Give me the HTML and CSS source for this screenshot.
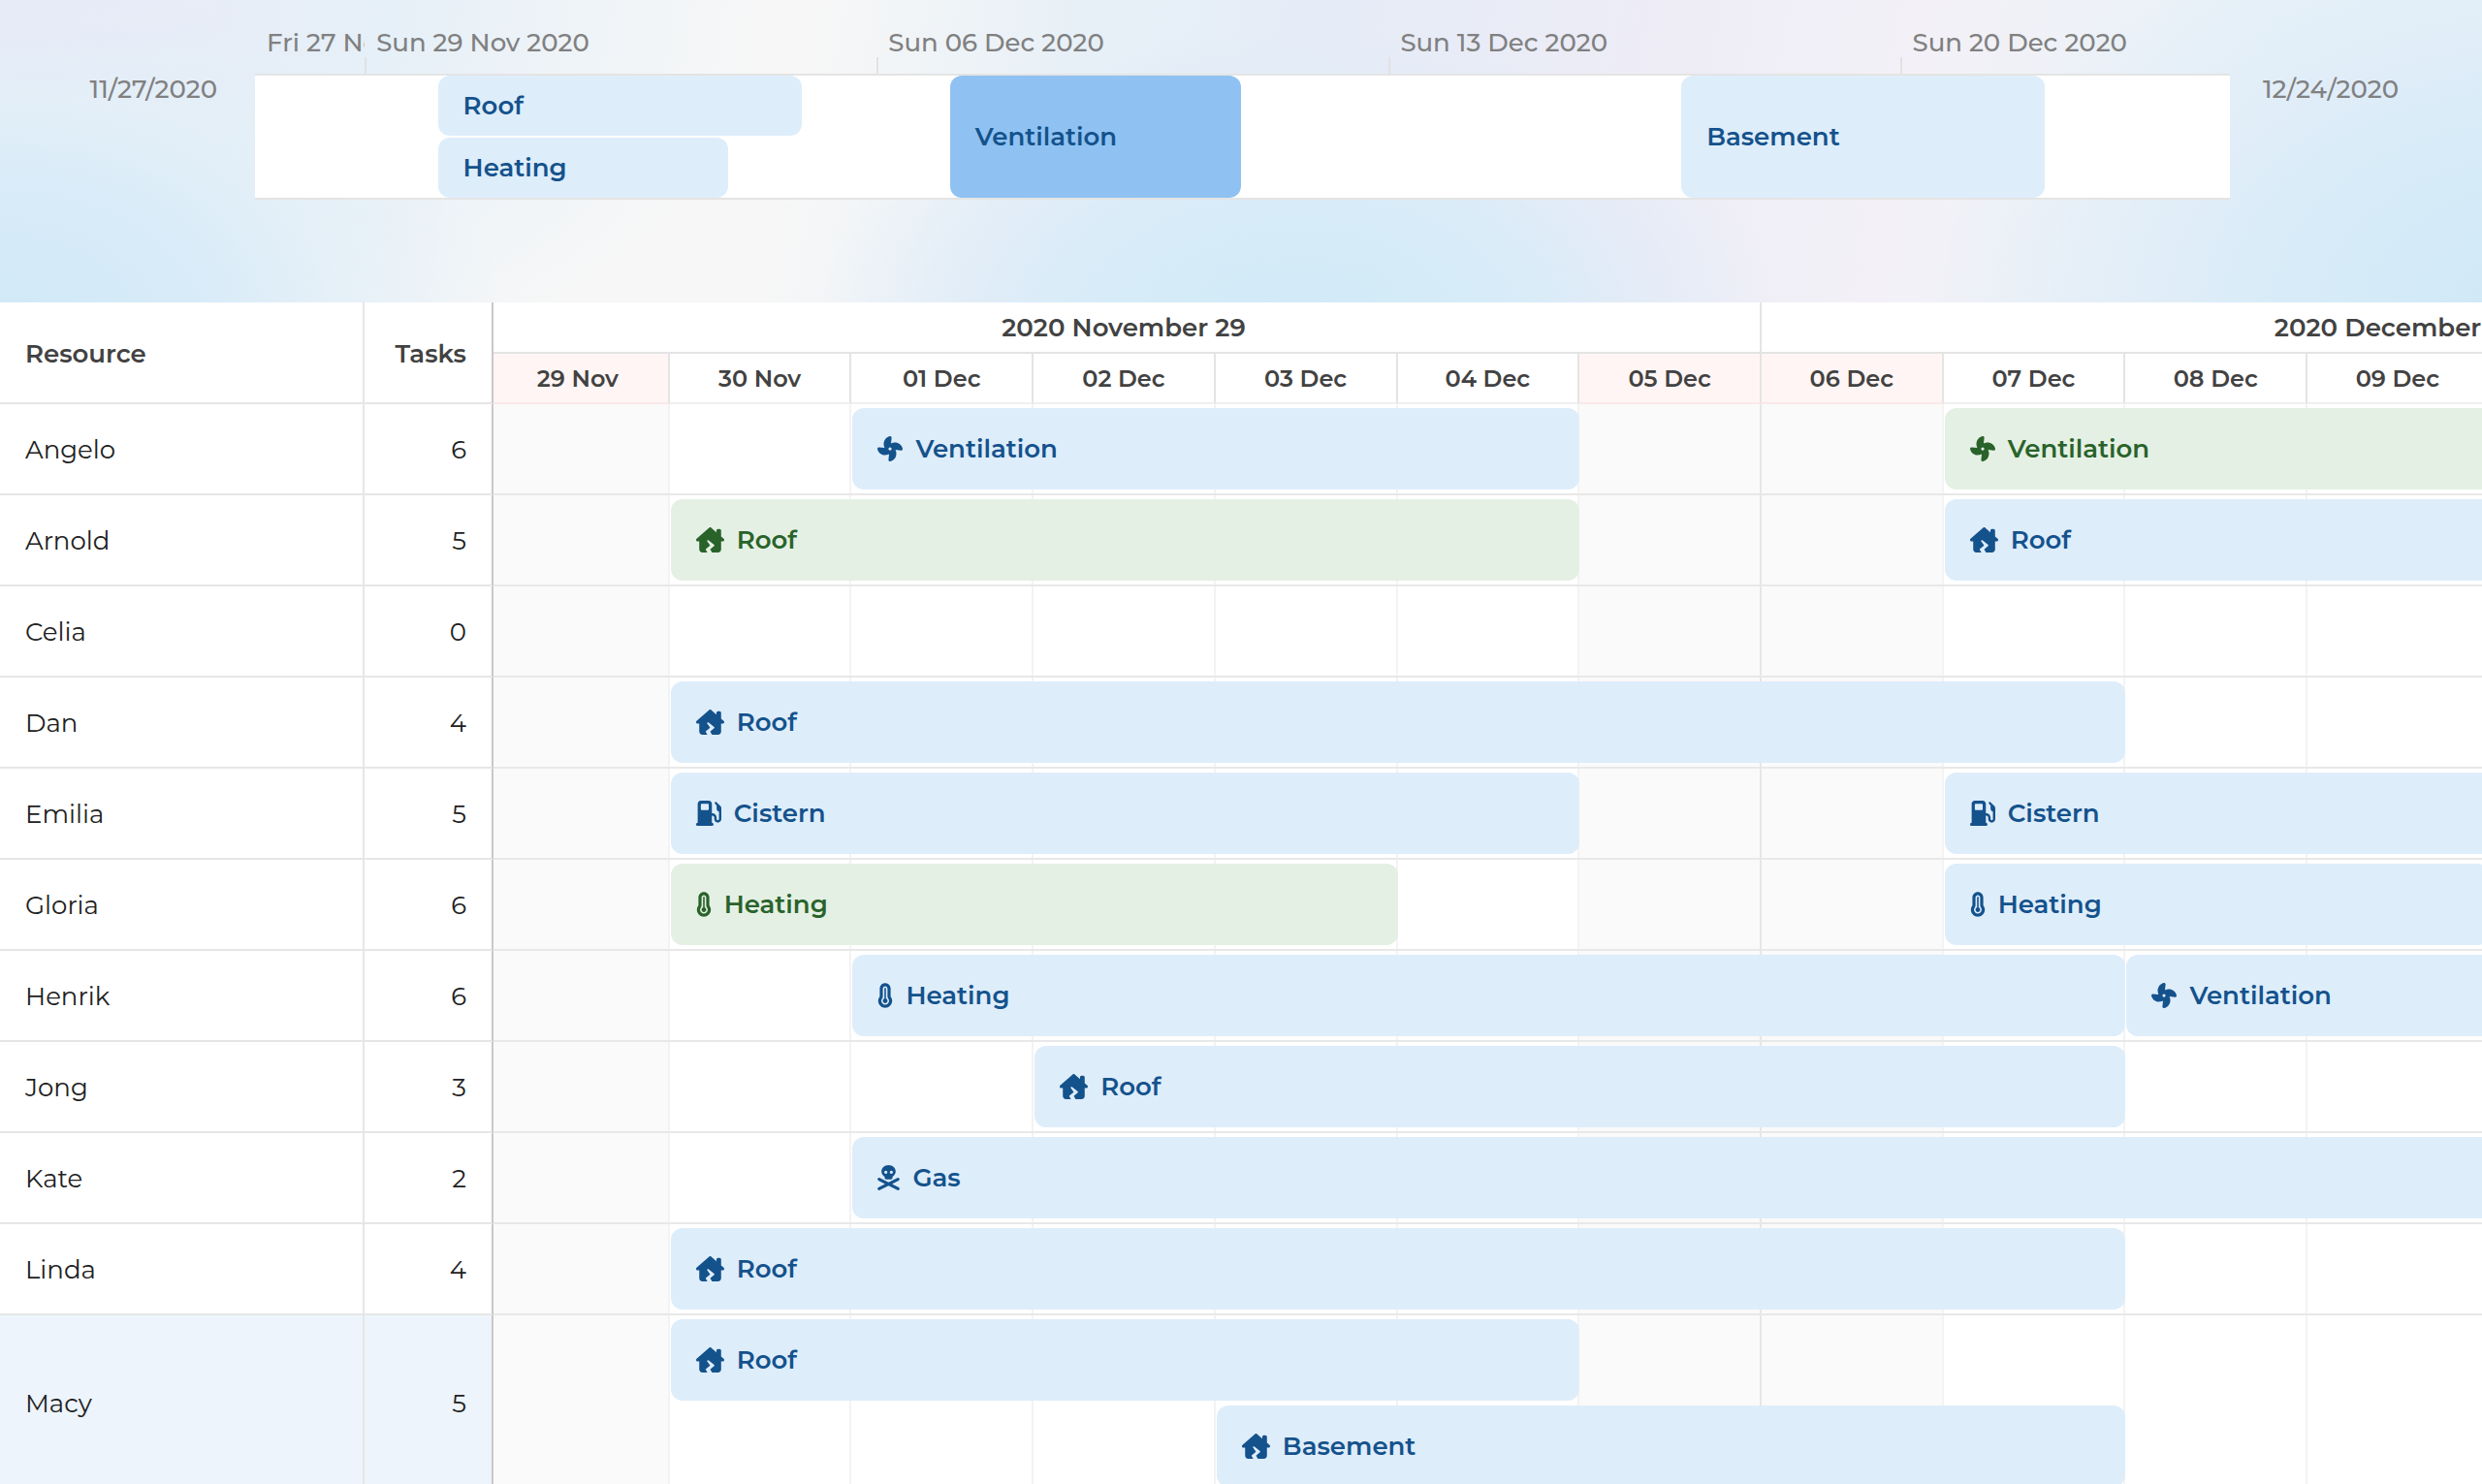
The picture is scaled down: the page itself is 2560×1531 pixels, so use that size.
FILE: index.html
```html
<!DOCTYPE html>
<html lang="en">
<head>
    <meta charset="utf-8">
    <title>Resource Scheduler</title>
    <link rel="stylesheet" href="styles.css">
</head>
<body>
    <svg class="icon-defs" aria-hidden="true">
        <symbol id="icon-fan" viewBox="0 0 512 512"><path d="M258.6 0c-1.7 0-3.4 .1-5.1 .5C168 17 115.6 102.3 130.5 189.3c2.9 17 8.4 32.9 15.9 47.4L32 224H29.4C13.2 224 0 237.2 0 253.4c0 1.7 .1 3.4 .5 5.1C17 344 102.3 396.4 189.3 381.5c17-2.9 32.9-8.4 47.4-15.9L224 480v2.6c0 16.2 13.2 29.4 29.4 29.4c1.7 0 3.4-.1 5.1-.5C344 495 396.4 409.7 381.5 322.7c-2.9-17-8.4-32.9-15.9-47.4L480 288h2.6c16.2 0 29.4-13.2 29.4-29.4c0-1.7-.1-3.4-.5-5.1C495 168 409.7 115.6 322.7 130.5c-17 2.9-32.9 8.4-47.4 15.9L288 32V29.4C288 13.2 274.8 0 258.6 0zM256 224a32 32 0 1 1 0 64 32 32 0 1 1 0-64z"/></symbol>
        <symbol id="icon-house" viewBox="0 0 576 512"><path d="M575.8 255.5c0 18-15 32.1-32 32.1l-32 0 .7 160.2c.2 35.5-28.5 64.3-64 64.3l-122.1 0L288 448l80.8-67.3c7.8-6.5 7.6-18.6-.4-24.9L250.6 263.2c-14.6-11.5-33.8 7-22.8 22L288 368l-85.5 71.2c-6.1 5-7.5 13.8-3.5 20.5L230.4 512l-102.3 0c-35.3 0-64-28.7-64-64l0-160.4-32 0c-18 0-32-14-32-32.1c0-9 3-17 10-24L266.4 8c7-7 15-8 22-8s15 2 21 7L416 100.7 416 64c0-17.7 14.3-32 32-32l32 0c17.7 0 32 14.3 32 32l0 121 52.8 46.4c8 7 12 15 11 24z"/></symbol>
        <symbol id="icon-pump" viewBox="0 0 512 512"><path d="M32 64C32 28.7 60.7 0 96 0H256c35.3 0 64 28.7 64 64V256h8c48.6 0 88 39.4 88 88v32c0 13.3 10.7 24 24 24s24-10.7 24-24V222c-27.6-7.1-48-32.2-48-62V96L384 64c-8.8-8.8-8.8-23.2 0-32s23.2-8.8 32 0l77.3 77.3c12 12 18.7 28.3 18.7 45.3V376c0 39.8-32.2 72-72 72s-72-32.2-72-72V344c0-22.1-17.9-40-40-40h-8V448c17.7 0 32 14.3 32 32s-14.3 32-32 32H32c-17.7 0-32-14.3-32-32s14.3-32 32-32V64zM96 80v96c0 8.8 7.2 16 16 16H240c8.8 0 16-7.2 16-16V80c0-8.8-7.2-16-16-16H112c-8.8 0-16 7.2-16 16z"/></symbol>
        <symbol id="icon-temp" viewBox="0 0 320 512"><path d="M160 64c-26.5 0-48 21.5-48 48V276.5c0 17.3-7.1 31.9-15.3 42.5C86.2 332.6 80 349.5 80 368c0 44.2 35.8 80 80 80s80-35.8 80-80c0-18.5-6.2-35.4-16.7-48.9c-8.2-10.6-15.3-25.2-15.3-42.5V112c0-26.5-21.5-48-48-48zM48 112C48 50.2 98.1 0 160 0s112 50.1 112 112V276.5c0 .1 .1 .3 .2 .6c.2 .6 .8 1.6 1.7 2.8c18.9 24.4 30.1 55 30.1 88.1c0 79.5-64.5 144-144 144S16 447.5 16 368c0-33.2 11.2-63.8 30.1-88.1c.9-1.2 1.5-2.2 1.7-2.8c.1-.3 .2-.5 .2-.6V112zM208 368c0 26.5-21.5 48-48 48s-48-21.5-48-48c0-20.9 13.4-38.7 32-45.3V112c0-8.8 7.2-16 16-16s16 7.2 16 16V322.7c18.6 6.6 32 24.4 32 45.3z"/></symbol>
        <symbol id="icon-skull" viewBox="0 0 448 512"><path d="M368 128c0 44.4-25.4 83.5-64 106.4V256c0 17.7-14.3 32-32 32H176c-17.7 0-32-14.3-32-32V234.4c-38.6-23-64-62.1-64-106.4C80 57.3 144.5 0 224 0s144 57.3 144 128zM168 176a32 32 0 1 0 0-64 32 32 0 1 0 0 64zm144-32a32 32 0 1 0 -64 0 32 32 0 1 0 64 0zM3.4 273.7c7.9-15.8 27.1-22.2 42.9-14.3L224 348.2l177.7-88.8c15.8-7.9 35-1.5 42.9 14.3s1.5 35-14.3 42.9L295.6 384l134.8 67.4c15.8 7.9 22.2 27.1 14.3 42.9s-27.1 22.2-42.9 14.3L224 419.8 46.3 508.6c-15.8 7.9-35 1.5-42.9-14.3s-1.5-35 14.3-42.9L152.4 384 17.7 316.6C1.9 308.7-4.5 289.5 3.4 273.7z"/></symbol>
    </svg>

    <header class="overview">
        <div class="range-start">11/27/2020</div>
        <div class="overview-main">
            <div class="overview-scale">
                <div class="tick">Fri 27 Nov 2020</div>
                <div class="tick">Sun 29 Nov 2020</div>
                <div class="tick">Sun 06 Dec 2020</div>
                <div class="tick">Sun 13 Dec 2020</div>
                <div class="tick">Sun 20 Dec 2020</div>
            </div>
            <div class="overview-track" id="overviewTrack"></div>
        </div>
        <div class="range-end">12/24/2020</div>
    </header>

    <main class="scheduler">
        <table class="resources">
            <thead>
                <tr>
                    <th class="name">Resource</th>
                    <th class="count">Tasks</th>
                </tr>
            </thead>
            <tbody id="resourceBody">
            </tbody>
        </table>

        <div class="timeline">
            <div class="timeline-content">
                <div class="timeline-header">
                    <div class="week">2020 November 29</div>
                    <div class="week">2020 December 06</div>
                </div>
                <div class="timeline-header days" id="dayHeader"></div>
                <div id="timelineBody"></div>
            </div>
        </div>
    </main>

    <script src="script.js"></script>
</body>
</html>
```
FILE: styles.css
```css
* {
    box-sizing: border-box;
}

body {
    font-family: Montserrat, Inter, sans-serif;
    font-size: 26px;
    line-height: 32px;
    color: #212121;
    background-color: #fff;
    margin: 0;
    height: 100vh;
    overflow: hidden;
}

.icon-defs {
    display: none;
}

/* Overview strip */

.overview {
    display: flex;
    height: 312px;
    font-weight: 500;
    color: #808080;
    background-color: #f7f7f7;
    background-image:
        radial-gradient(ellipse 520px 360px at 0 340px, #d0e9f7 0%, #d8ebf8 40%, rgba(226, 239, 248, 0.8) 66%, rgba(247, 247, 247, 0) 100%),
        radial-gradient(ellipse 500px 320px at 1340px 350px, #d0e9f7 0%, #d7ecf8 45%, rgba(222, 235, 248, 0.7) 70%, rgba(235, 241, 248, 0) 100%),
        radial-gradient(ellipse 620px 440px at 2620px 320px, #cfe8f7 0%, #d8ecf8 45%, #e0edf8 62%, rgba(236, 243, 248, 0) 100%),
        radial-gradient(ellipse 800px 460px at 0 0, #e9e9f7 0%, #e6f0f8 50%, rgba(247, 247, 247, 0) 100%),
        linear-gradient(100deg, #f7f7f7 32%, #e7f0f7 43%, #e5ecf7 52%, #edecf6 65%, #f3f1f7 76%, #e8f2f8 90%);
}

.range-start {
    width: 263px;
    padding: 76px 39px 0 0;
    text-align: right;
}

.range-end {
    width: 260px;
    padding: 76px 0 0 34px;
}

.overview-main {
    flex: 1;
    min-width: 0;
}

/* 27 days, noon to noon, counted in half days */
.overview-scale {
    display: grid;
    grid-template-columns: 3fr 14fr 14fr 14fr 9fr;
    height: 76px;
}

.tick {
    min-width: 0;
    padding: 28px 0 0 12px;
    white-space: nowrap;
    overflow: hidden;
    background: linear-gradient(#e2e2e2, #e2e2e2) left bottom / 2px 17px no-repeat;
}

.tick:first-child {
    background: none;
}

.overview-track {
    display: grid;
    grid-template-columns: repeat(54, minmax(0, 1fr));
    grid-template-rows: 62px 62px;
    gap: 2px 0;
    background-color: #fff;
    border-top: 2px solid #e4e4e4;
    border-bottom: 2px solid #e4e4e4;
}

.overview-track .bar {
    margin-right: 2px;
}

/* Task bars */

.bar {
    display: flex;
    align-items: center;
    gap: 13px;
    min-width: 0;
    padding: 0 26px;
    border-radius: 12px;
    font-weight: 600;
    white-space: nowrap;
    overflow: hidden;
    color: #14528c;
    background-color: #deedfa;
}

.bar.selected {
    background-color: #8fc2f2;
}

.bar.green {
    color: #29632a;
    background-color: #e5f0e4;
}

.bar.tall {
    grid-row: 1 / 3;
}

.bar svg {
    flex: none;
    height: 26px;
    fill: currentColor;
}

/* Resource columns */

.scheduler {
    display: flex;
    align-items: flex-start;
}

.resources {
    flex: none;
    width: 509px;
    table-layout: fixed;
    border-collapse: separate;
    border-spacing: 0;
}

.resources th,
.resources td {
    height: 94px;
    padding: 2px 26px 0;
    border-bottom: 2px solid #e6e6e6;
    text-align: left;
}

.resources th {
    height: 105px;
    font-weight: 600;
    color: #424242;
}

.resources .name {
    width: 376px;
    border-right: 2px solid #e6e6e6;
}

.resources .count {
    text-align: right;
    border-right: 2px solid #c8c8c8;
}

.resources .double td {
    height: 182px;
}

.resources .selected td {
    background-color: #edf4fc;
}

/* Timeline, scrolled slightly to the right */

.timeline {
    flex: 1;
    min-width: 0;
    overflow: hidden;
}

.timeline-content {
    width: 2628px;
    margin-left: -6px;
}

.timeline-header {
    display: grid;
    grid-template-columns: 1fr 1fr;
    font-weight: 600;
    line-height: 49px;
    text-align: center;
    color: #424242;
}

.timeline-header.days {
    grid-template-columns: repeat(14, minmax(0, 1fr));
    font-size: 24px;
    line-height: 48px;
}

.week,
.day {
    padding-top: 2px;
    border-right: 2px solid #e4e4e4;
    border-bottom: 2px solid #e4e4e4;
}

.day {
    border-bottom-color: #f0f0f0;
}

.day.weekend {
    background-color: #fff5f4;
    border-bottom-color: #f8eae9;
}

.row {
    display: grid;
    grid-template-columns: repeat(14, minmax(0, 1fr));
    grid-template-rows: 4px 84px 4px;
    border-bottom: 2px solid #e8e8e8;
}

.row.double {
    grid-template-rows: 4px 84px 5px 84px 3px;
}

.row .bar {
    margin-left: 1px;
}

.cell {
    grid-row: 1 / -1;
    border-right: 2px solid #f3f3f3;
}

.cell.weekend {
    background-color: #fafafa;
}

.cell.week-end {
    border-right-color: #e6e6e8;
}
```
FILE: script.js
```javascript
const DAY_COUNT = 14;
const dayNames = ['29 Nov', '30 Nov', '01 Dec', '02 Dec', '03 Dec', '04 Dec', '05 Dec',
    '06 Dec', '07 Dec', '08 Dec', '09 Dec', '10 Dec', '11 Dec', '12 Dec'];

const icons = {
    Ventilation: ['fan', 26],
    Roof: ['house', 29],
    Basement: ['house', 29],
    Cistern: ['pump', 26],
    Heating: ['temp', 16],
    Gas: ['skull', 23]
};

// start is the day index from 29 Nov, days is the length
const resources = [
    { name: 'Angelo', count: 6, tasks: [{ name: 'Ventilation', start: 2, days: 4 }, { name: 'Ventilation', start: 8, days: 5, green: true }] },
    { name: 'Arnold', count: 5, tasks: [{ name: 'Roof', start: 1, days: 5, green: true }, { name: 'Roof', start: 8, days: 5 }] },
    { name: 'Celia', count: 0, tasks: [] },
    { name: 'Dan', count: 4, tasks: [{ name: 'Roof', start: 1, days: 8 }] },
    { name: 'Emilia', count: 5, tasks: [{ name: 'Cistern', start: 1, days: 5 }, { name: 'Cistern', start: 8, days: 5 }] },
    { name: 'Gloria', count: 6, tasks: [{ name: 'Heating', start: 1, days: 4, green: true }, { name: 'Heating', start: 8, days: 3 }] },
    { name: 'Henrik', count: 6, tasks: [{ name: 'Heating', start: 2, days: 7 }, { name: 'Ventilation', start: 9, days: 4 }] },
    { name: 'Jong', count: 3, tasks: [{ name: 'Roof', start: 3, days: 6 }] },
    { name: 'Kate', count: 2, tasks: [{ name: 'Gas', start: 2, days: 11 }] },
    { name: 'Linda', count: 4, tasks: [{ name: 'Roof', start: 1, days: 8 }] },
    { name: 'Macy', count: 5, selected: true, double: true, tasks: [{ name: 'Roof', start: 1, days: 5 }, { name: 'Basement', start: 4, days: 5, lane: 1 }] }
];

// start and length in half days from 27 Nov noon
const overviewTasks = [
    { name: 'Roof', start: 5, length: 10, row: 1 },
    { name: 'Heating', start: 5, length: 8, row: 2 },
    { name: 'Ventilation', start: 19, length: 8, classes: 'tall selected' },
    { name: 'Basement', start: 39, length: 10, classes: 'tall' }
];

function isWeekend(index) {
    return index % 7 === 0 || index % 7 === 6;
}

function renderOverview() {
    const track = document.getElementById('overviewTrack');
    for (const task of overviewTasks) {
        const bar = document.createElement('div');
        bar.className = 'bar ' + (task.classes || '');
        bar.style.gridColumn = `${task.start + 1} / span ${task.length}`;
        if (task.row) {
            bar.style.gridRow = task.row;
        }
        bar.textContent = task.name;
        track.appendChild(bar);
    }
}

function renderDays() {
    document.getElementById('dayHeader').innerHTML = dayNames
        .map((name, i) => `<div class="day ${isWeekend(i) ? 'weekend' : ''}">${name}</div>`)
        .join('');
}

function renderResources() {
    const resourceBody = document.getElementById('resourceBody');
    const timelineBody = document.getElementById('timelineBody');
    for (const resource of resources) {
        const tr = document.createElement('tr');
        tr.className = (resource.selected ? 'selected ' : '') + (resource.double ? 'double' : '');
        tr.innerHTML = `
            <td class="name">${resource.name}</td>
            <td class="count">${resource.count}</td>
        `;
        resourceBody.appendChild(tr);

        const row = document.createElement('div');
        row.className = 'row ' + (resource.double ? 'double' : '');
        for (let i = 0; i < DAY_COUNT; i++) {
            const cell = document.createElement('div');
            cell.className = 'cell' + (isWeekend(i) ? ' weekend' : '') + (i % 7 === 6 ? ' week-end' : '');
            cell.style.gridColumn = i + 1;
            row.appendChild(cell);
        }
        for (const task of resource.tasks) {
            const [icon, width] = icons[task.name];
            const bar = document.createElement('div');
            bar.className = 'bar ' + (task.green ? 'green' : '');
            bar.style.gridColumn = `${task.start + 1} / span ${task.days}`;
            bar.style.gridRow = task.lane ? 4 : 2;
            bar.innerHTML = `<svg width="${width}" aria-hidden="true"><use href="#icon-${icon}"/></svg><span>${task.name}</span>`;
            row.appendChild(bar);
        }
        timelineBody.appendChild(row);
    }
}

renderOverview();
renderDays();
renderResources();
```
